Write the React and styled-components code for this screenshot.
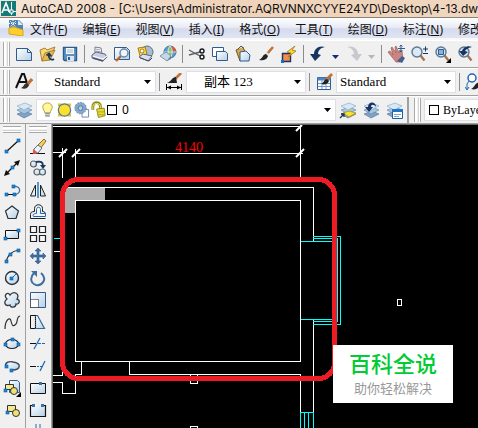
import React from "react";
import styled, { createGlobalStyle } from "styled-components";

const blue = "#2f5b8f";
const pale = "#cfe2f1";
const navy = "#17365f";

const Sheets = () => (
    <>
        <path d="M2 13l8-3 7 3-8 4z" fill="#7fa3c6" stroke="#4d7299" strokeWidth=".6" />
        <path d="M2 9l8-3 7 3-8 4z" fill="#a9c6df" stroke="#5b82a8" strokeWidth=".6" />
        <path d="M2 5l8-3 7 3-8 4z" fill="#d8e8f4" stroke="#7fa3c4" strokeWidth=".6" />
    </>
)

const Glass = ({ x = 7, y = 7, r = 5 }) => (
    <>
        <path d={`M${x + r * 0.7} ${y + r * 0.7}l4 5`} stroke="#a9744f" strokeWidth="2.4" />
        <circle cx={x} cy={y} r={r} fill="#d9eaf6" stroke="#5c7893" strokeWidth="1.4" />
    </>
)

const Brush = () => (
    <>
        <path d="M16 2l-6 7" stroke="#c2703a" strokeWidth="2.6" />
        <path d="M11 8l-2 2" stroke="#ddd" strokeWidth="3" />
        <path d="M9 9c-3 0-3 4-7 6 4 1 8 0 9-4z" fill="#222" />
    </>
)

const Handles = ({ points }) => points.map(([x, y]) => (
    <rect key={x + "-" + y} x={x - 1.5} y={y - 1.5} width="3" height="3" fill="#1a86d8" stroke="#0a5aa0" strokeWidth=".6" />
))

const icons = {
    create: <path d="M1.500 3.500h11l4 4v8h-15z M12.500 3.500v4h4" fill="url(#paper)" stroke={blue} />,
    open: <>
        <path d="M2 5l5-2 2 2 8-3-3 6-10 8z" fill="#f5d778" stroke="#a9812f" />
        <path d="M4 16l3-8 10-3-5 10z" fill="#e8b94e" stroke="#a9812f" />
        <path d="M16 14c-3 2-6-1-5-4M8.500 10.500l2.500-2 2.500 3" fill="none" stroke={navy} strokeWidth="1.800" />
    </>,
    save: <>
        <path d="M2.500 2.500h13v13h-12l-1-1z" fill="#5d91c4" stroke={blue} strokeWidth="1.400" />
        <path d="M5 3h8v6H5z" fill="#f4f8fb" />
        <path d="M6 5h6M6 7h6" stroke="#9fb6ca" />
        <path d="M6 11h7v5H6z" fill="#dbe5ee" />
        <path d="M7 12h2v3H7z" fill={blue} />
    </>,
    print: <>
        <path d="M5 9V2l6 1 1 6z" fill="#fff" stroke="#777b91" />
        <path d="M6 4l4 1M6 6l5 1" stroke="#9ba0b5" />
        <path d="M2 10l4-3 9 2 2 3-4 4-11-3z" fill="#c9cee0" stroke="#5f6580" />
        <path d="M3 11l10 3 4-3" fill="none" stroke="#fff" />
        <path d="M3 13l10 3" stroke="#4f5570" strokeWidth="1.500" />
    </>,
    preview: <>
        <path d="M1.500 2.500h12l3 3v9h-15z" fill="url(#paper)" stroke={blue} />
        <path d="M8 11l-5 5" stroke="#b8642c" strokeWidth="2.400" />
        <circle cx="11" cy="8" r="4" fill="#eef6fb" stroke="#6b89a6" strokeWidth="1.500" />
    </>,
    publish: <>
        <circle cx="11" cy="7" r="6" fill="#a7bdd0" stroke="#53728f" />
        <path d="M2 3l7-1 2 7-7 2z" fill="#ffdc43" stroke="#a77e14" />
        <circle cx="6" cy="6" r="2" fill="#fff" stroke="#a77e14" />
        <path d="M3 12l4-3 9 2-4 5z" fill="#dce0ec" stroke="#5d6582" />
        <path d="M4 13l9 3 3-3" fill="none" stroke="#47506b" />
    </>,
    web: <>
        <circle cx="11" cy="7" r="6" fill="#4fa0d1" stroke="#4777a4" />
        <path d="M11 1c4 0 6 3 6 6l-5 1z" fill="#cf5844" />
        <path d="M11 1c-3 3-2 8 0 12 3-4 3-9 0-12zM5 7h12" fill="#83c26d" stroke="#e9f4fa" strokeWidth=".8" />
        <path d="M1 11l6-4 5 4-4 5z" fill="#c8d7e7" stroke="#8097b0" />
        <path d="M8 16l4-5v3z" fill="#6880a0" />
    </>,
    cut: <>
        <path d="M1 5l11 6M1 10l11-3" stroke="#59616a" strokeWidth="1.400" />
        <circle cx="14" cy="6" r="2" fill="none" stroke="#16191f" strokeWidth="1.400" />
        <circle cx="14" cy="12" r="2" fill="none" stroke="#16191f" strokeWidth="1.400" />
    </>,
    copy: <>
        <path d="M1.500 2.500h11v9h-11z" fill="#fff" stroke={blue} />
        <path d="M5.500 6.500h9l2 2v7h-11z" fill="url(#paper)" stroke={blue} />
    </>,
    paste: <>
        <path d="M2 5l7-3 4 10-7 4z" fill="#d9a94b" stroke="#73541f" />
        <path d="M4 4l3-3 2 2" fill="#ddd" stroke="#555" />
        <path d="M6 7l6-1 4 4-1 6H6z" fill="url(#paper)" stroke={blue} />
    </>,
    match: <Brush />,
    block: <>
        <path d="M2.500 8.500h8v8h-8z" fill="#f58a52" stroke={navy} strokeWidth="1.400" />
        <path d="M1 15h3v3H1z" fill="#0b74c8" />
        <path d="M15 1L7 7l4 1-3 4 8-6-4-1z" fill="#ffd42e" stroke="#a5731a" strokeWidth=".8" />
    </>,
    undo: <path d="M16 2C10 0 5 4 5 9H1l5 7 6-6-3-1c0-3 2-6 7-7z" fill={navy} />,
    redo: <path d="M2 2c6-2 11 2 11 7h4l-5 7-6-6 3-1c0-3-2-6-7-7z" fill="#c7c9cc" />,
    pan: <>
        <path d="M1 7l2-1 3 4-2-7 1-1 4 6-1-6 1-1 3 7 1-3 2 1 1 8-3 3H9z" fill="#cc8580" stroke="#9a5b5a" strokeWidth=".7" />
        <path d="M10 16l5-5 3 2-3 5z" fill="#42618e" />
        <path d="M14 0v7M11 3.500h7M12.500 1.500L14 0l1.500 1.500M12.500 5.500L14 7l1.500-1.500" fill="none" stroke={blue} />
    </>,
    zoom: <><Glass /><path d="M13 4h5M15.500 1.500v5M13 8.500h5" stroke={navy} /></>,
    zoomWindow: <>
        <Glass x={8} />
        <path d="M5.500 4.500h5v5h-5z" fill="#8cb4da" stroke={blue} />
        <path d="M18 13v5h-5z" fill="#000" />
    </>,
    zoomPrevious: <>
        <Glass x={8} />
        <path d="M16 2c-5-2-9 1-10 4H3l4 5 5-4-3-1c1-2 3-3 7-4z" fill={navy} />
    </>,
    textStyle: <>
        <path d="M1 15L7 1h2l4 12M4 9h7" fill="none" stroke="#111" strokeWidth="2" />
        <path d="M17 6l-5 6" stroke="#c2703a" strokeWidth="3" />
        <path d="M12 10c-3 0-3 4-6 5 4 2 7 0 8-3z" fill="#333" />
    </>,
    dimStyle: <>
        <path d="M16 0l-6 6" stroke="#c2703a" strokeWidth="2.600" />
        <path d="M11 4c-4 0-4 4-9 6h10z" fill="#222" />
        <path d="M1.500 11v6M16.500 11v6M2 14.500h14" fill="none" stroke="#000" />
        <path d="M2 14.500l4-2v4zM16 14.500l-4-2v4z" fill="#000" />
    </>,
    tableStyle: <>
        <path d="M2.500 4.500h13v12h-13z" fill="#fff" stroke={blue} />
        <path d="M2.500 4.500h13v3h-13z" fill="#4f86c6" />
        <path d="M3 10.500h12M3 13.500h12M7 7v9M11 7v9" stroke="#6f9bcb" />
        <path d="M17 1l-6 6" stroke="#c2703a" strokeWidth="2.600" />
        <path d="M12 6c-3 0-3 4-6 5 4 1 7 0 8-3z" fill="#222" />
    </>,
    leaderStyle: <>
        <circle cx="7" cy="5" r="4" fill="#fff" stroke="#1e67ad" strokeWidth="1.500" />
        <path d="M4 8l-2 3v5M0 14l2 3 2-3" fill="none" stroke="#1e67ad" />
        <path d="M17 8l-5 4" stroke="#c2703a" strokeWidth="3" />
        <path d="M13 10c-3 0-3 4-7 6 4 1 7 0 9-3z" fill="#222" />
    </>,
    layers: <Sheets />,
    layerCurrent: <>
        <Sheets />
        <path d="M4 12l6-2 7 2-7 4z" fill="#f7e12c" stroke="#9c8a12" strokeWidth=".7" />
        <path d="M1 17l4-4M2 13h3v3" fill="none" stroke={navy} strokeWidth="1.300" />
    </>,
    layerPrevious: <>
        <Sheets />
        <path d="M14 6c0-6-8-6-8 0H3l4 5 4-5H9c0-3 3-3 5 0z" fill={navy} />
    </>,
    layerStates: <>
        <Sheets />
        <path d="M7.500 8.500h10v9h-10z" fill="#fff" stroke="#135fa8" />
        <path d="M7 8h11v3H7z" fill="#1f74c3" />
        <path d="M9 13.500h7M9 15.500h5" stroke="#7ca5ca" />
    </>,
    bulb: <>
        <path d="M6 12c0-3-2-3-2-6 0-6 10-6 10 0 0 3-2 3-2 6z" fill="#fff6a0" stroke="#b7a335" />
        <path d="M6.500 12h5v4h-5z" fill="#8b93a0" />
        <path d="M6 14h6" stroke="#e5e5e5" />
    </>,
    sun: <>
        <path d="M2 2h4v3H2zM12 2h4v3h-4zM2 13h4v3H2zM12 13h4v3h-4z" fill="#d8c83a" />
        <circle cx="9" cy="9" r="6.500" fill="#ffdf2c" stroke="#4c7994" strokeWidth="1.300" />
    </>,
    freeze: <>
        <path d="M9.500 8.500h7v8h-7z" fill="#fff" stroke="#6c87a8" />
        <circle cx="8" cy="7" r="6" fill="#86a9cb" stroke="#5e82a8" strokeDasharray="2 1" />
        <circle cx="8" cy="7" r="2.500" fill="#b9d0e4" stroke="#4e769f" />
    </>,
    lock: <>
        <path d="M3 9V5c0-5 8-5 8 0v4" fill="none" stroke="#8f8a1d" strokeWidth="3" />
        <path d="M3 9V5c0-4 8-4 8 0v3" fill="none" stroke="#ece46b" />
        <path d="M7 8l8-1 1 8-7 2z" fill="#e9dc32" stroke="#8f8a1d" />
        <path d="M8 11h7M8 14h7" stroke="#aaa31f" />
    </>,
    line: <><path d="M3 15L15 4" stroke="#111" strokeWidth="1.200" /><Handles points={[[3.5, 14.5], [15.5, 3.5]]} /></>,
    ray: <>
        <path d="M3 15L15 3" stroke="#111" strokeWidth="1.200" />
        <path d="M1 17l2-6 4 4zM17 1l-6 2 4 4z" fill="#111" />
        <Handles points={[[9.5, 8.5]]} />
    </>,
    polyline: <>
        <path d="M2 13.500h9" stroke="#111" />
        <path d="M11 13.500c8 0 7-9 0-8" fill="none" stroke="#3b71a6" strokeWidth="1.300" />
        <Handles points={[[3.5, 13.5], [11.5, 13.5], [10.5, 5.5]]} />
    </>,
    polygon: <path d="M9 3l6.500 5-2.500 7.500H5L2.500 8z" fill="url(#paper)" stroke="#27313d" strokeWidth="1.200" />,
    rectangle: <><path d="M2.500 5.500h13v8h-13z" fill="url(#paper)" stroke="#111" /><Handles points={[[2.5, 13.5], [15.5, 5.5]]} /></>,
    arc: <><path d="M3 16C4 9 8 4 16 3" fill="none" stroke="#333" strokeWidth="1.200" /><Handles points={[[3.5, 14.5], [7.5, 7.5], [15.5, 3.5]]} /></>,
    circle: <><circle cx="9" cy="9" r="6.500" fill="url(#paper)" stroke="#27313d" strokeWidth="1.400" /><path d="M9 9l4-4" stroke="#0b74c8" /><Handles points={[[8.5, 9.5]]} /></>,
    cloud: <path d="M4 8C0 4 5 0 7 4c4-5 10-1 7 4 4 1 2 6-1 5 0 4-6 4-6 1-5 2-7-3-3-6z" fill="url(#paper)" stroke="#333b45" strokeWidth="1.300" />,
    spline: <path d="M2 16C2 7 7 3 8 8s2 6 5 3c2-2 0-7 4-8" fill="none" stroke="#333" strokeWidth="1.200" />,
    ellipse: <><ellipse cx="9" cy="9" rx="6.500" ry="4.500" fill="url(#paper)" stroke="#222" strokeWidth="1.200" /><Handles points={[[2.5, 9.5], [9.5, 4.5], [15.5, 9.5]]} /></>,
    ellipseArc: <><path d="M3 10C1 5 7 4 10 5c9 1 8 8-1 8" fill="url(#paper)" stroke="#3a4857" strokeWidth="1.400" /><Handles points={[[3.5, 9.5], [8.5, 13.5]]} /></>,
    insert: <>
        <path d="M6.500 1.500h8l2 2v10h-10z" fill="url(#paper)" stroke={blue} />
        <path d="M2.500 5.500h8v5h-8z" fill="#f4ea8b" stroke="#333" />
        <circle cx="11" cy="12" r="3.500" fill="#eee176" stroke="#333" />
        <path d="M18 13v5h-5z" fill="#000" />
        <Handles points={[[2.5, 11.5]]} />
    </>,
    makeBlock: <><path d="M4.500 4.500h8v6h-8z" fill="#f4ea8b" stroke="#333" /><circle cx="13" cy="12" r="3.500" fill="#eee176" stroke="#333" /><Handles points={[[4.5, 11.5]]} /></>,
    erase: <>
        <path d="M1 16.500h15" stroke="#111" />
        <path d="M8 9l7-7 2 2-6 8z" fill="#f4cf58" stroke="#8c6a22" />
        <path d="M5 12l4-4 4 3-4 5H5z" fill="#eef3f7" stroke="#53718e" />
        <path d="M4 12l4 3-1 2H4z" fill="#df5144" />
    </>,
    duplicate: <>
        <circle cx="4.500" cy="5" r="3" fill="url(#paper)" stroke="#56616d" strokeWidth="1.200" />
        <circle cx="8" cy="13" r="3" fill="url(#paper)" stroke="#56616d" strokeWidth="1.200" />
        <circle cx="13.500" cy="13" r="3" fill="url(#paper)" stroke="#56616d" strokeWidth="1.200" />
        <path d="M7 3c5-1 7 0 7 4" fill="none" stroke={navy} strokeWidth="1.800" />
        <path d="M11 6h6l-3 4z" fill={navy} />
    </>,
    mirror: <><path d="M6.500 4v11H1.500z" fill="#e8f0f6" stroke="#222" /><path d="M11.500 4v11h5z" fill={pale} stroke="#222" /><path d="M9 1v16" stroke="#0b74c8" strokeWidth="1.400" /></>,
    offset: <>
        <path d="M1.500 15.500v-4c0-2 1-3 4-3v-3c0-5 8-5 8 0v3c2 0 3 1 3 3" fill="none" stroke="#222" />
        <path d="M1.500 15.500h15" stroke="#222" />
        <path d="M4.500 13.500c-1-2 0-3 3-3v-4c0-3 4-3 4 0v4h5v3z" fill="#eef5fb" stroke="#1e67ad" />
    </>,
    array: <path d="M1.500 1.500h6v6h-6zM10.500 1.500h6v6h-6zM1.500 10.500h6v6h-6zM10.500 10.500h6v6h-6z" fill="#f4f8fb" stroke="#222" strokeWidth="1.200" />,
    move: <path d="M9 1l3 3h-2v4h4V6l3 3-3 3v-2h-4v4h2l-3 3-3-3h2v-4H4v2L1 9l3-3v2h4V4H6z" fill="#3f6ea5" stroke="#315d8f" strokeWidth=".6" />,
    rotate: <>
        <path d="M12 4c7 6 1 13-5 12-6-2-6-8-2-12" fill="none" stroke="#3f6ea5" strokeWidth="2" />
        <path d="M2 2h6v6z" fill="#3f6ea5" />
    </>,
    scale: <><path d="M1.500 1.500h15v15h-15z" fill="url(#paper)" stroke={blue} /><path d="M1.500 8.500h8v8h-8z" fill="#fff" stroke="#111" strokeDasharray="1 1" /></>,
    stretch: <><path d="M6.500 2.500h2l7 13h-9z" fill="url(#paper)" stroke="#376895" strokeWidth="1.200" /><path d="M6 2.500H1.500v13H6" fill="none" stroke="#111" /><path d="M6.500 2v14" stroke="#111" strokeDasharray="1 1" /></>,
    trim: <><path d="M1 8.500h6" stroke="#111" /><path d="M9 8.500h8" stroke="#1e67ad" strokeDasharray="3 1" /><path d="M5 14l6-11" stroke="#1e67ad" strokeWidth="1.200" /></>,
    extend: <><path d="M1 9.500h6" stroke="#111" /><path d="M8 9.500h5" stroke="#1e67ad" strokeDasharray="2 1" /><path d="M11 14l5-10" stroke="#1e67ad" strokeWidth="1.300" /></>,
    breakPoint: <><path d="M1.500 4.500h15v10h-15z" fill="url(#paper)" stroke="#111" /><path d="M10 3h3v3h-3z" fill="#3773aa" /></>,
    breakLine: <><path d="M2 4h14v11H2z" fill="url(#paper)" /><path d="M4 4.500H1.500v11h15v-11H14" fill="none" stroke="#111" strokeWidth="1.200" /><path d="M3 3h3v3H3zM12 3h3v3h-3z" fill="#3773aa" /></>,
    join: <path d="M7 1v9M11 1v9" stroke="#1e67ad" />,
}

const Icon = ({ name }) => <Glyph viewBox="0 0 18 18" aria-hidden="true">{icons[name]}</Glyph>

const Arrow = () => <ArrowGlyph viewBox="0 0 7 4" aria-hidden="true"><path d="M0 0h7L3.500 4z" fill="currentColor" /></ArrowGlyph>

const menus = [
    ["文件", "F"], ["编辑", "E"], ["视图", "V"], ["插入", "I"], ["格式", "O"],
    ["工具", "T"], ["绘图", "D"], ["标注", "N"], ["修改", "M"],
]

const standardTools = [
    "create", "open", "save", "|", "print", "preview", "publish", "web", "|",
    "cut", "copy", "paste", "match", "block", "|", "undo", "v", "redo", "v-off", "|",
    "pan", "zoom", "zoomWindow", "zoomPrevious",
]

const drawTools = [
    "line", "ray", "polyline", "polygon", "rectangle", "arc", "circle",
    "cloud", "spline", "ellipse", "ellipseArc", "insert", "makeBlock",
]

const modifyTools = [
    "erase", "duplicate", "mirror", "offset", "array", "move", "rotate",
    "scale", "stretch", "trim", "extend", "breakPoint", "breakLine", "join",
]

const Tool = ({ name }) => {
    if (name === "|") return <Divider />
    if (name === "v" || name === "v-off") {
        return <MoreButton aria-label="history" $off={name === "v-off"}><Arrow /></MoreButton>
    }
    return <ToolButton aria-label={name}><Icon name={name} /></ToolButton>
}

const StyleSelect = ({ label, value, indent }) => (
    <Combo $width={120}>
        <Select aria-label={label} $indent={indent}><option>{value}</option></Select>
        <Arrow />
    </Combo>
)

const Drawing = () => (
    <Plan aria-label="floor plan">
        <g transform="translate(-53 -125)" fill="none" stroke="#fff" shapeRendering="crispEdges">
            <path d="M65 187h40v13H75v13H65z" fill="#adadad" stroke="none" />
            <path d="M53 126.500h248M300.500 125v52M53 152.500h13M62.500 148v30M75.500 149v28M75 153.500h228" />
            <path d="M68 187.500h245.500V241M313.500 319v93M300.500 374v38" />
            <path d="M75.500 200.500h225v161h-225z" />
            <path d="M81.500 361v13.500h-6v19h-13v-11H53M53 375.500h9.500V371M129.500 361v13.500h171" />
            <path d="M190.500 374v9h7v-9M190.500 428v-1.500h7v1.500" />
            <path d="M54 251.500h7" />
            <path d="M397.500 299.500h4v6h-4z" />
            <g stroke="#00ffff">
                <path d="M54 238.500h7M301 241.500h32M301 319.500h32" />
                <path d="M313 236.500h27.500v88H313M313 238.500h24.500v83H313" />
                <path d="M300.500 428v-15.500h13V428M304.500 412v16M308.500 412v16" />
            </g>
            <g strokeWidth="2" shapeRendering="auto">
                <path d="M59 157l8-8M72 157l8-8M296 157l8-8M296 131l6-6" />
            </g>
            <DimensionText x="175" y="152">4140</DimensionText>
            <rect x="62.500" y="179.500" width="272" height="199" rx="16" stroke="#ed1c24" strokeWidth="5" />
        </g>
    </Plan>
)

const App = () => {
    return (
        <Window>
            <GlobalStyle />
            <Defs aria-hidden="true">
                <linearGradient id="paper" x1="0" y1="0" x2="1" y2="1">
                    <stop offset="0" stopColor="#fff" />
                    <stop offset="1" stopColor="#b5d0e6" />
                </linearGradient>
            </Defs>
            <TitleBar>
                <Logo viewBox="0 0 15 15" aria-hidden="true">
                    <path d="M0 0h15v15H0z" fill="#147b7b" />
                    <path d="M1 12L5 2l4 10M3 9h5" fill="none" stroke="#fff" strokeWidth="1.600" />
                    <path d="M10.500 1v13M7 10.500h8" stroke="#fff" />
                    <path d="M9 9h3v3H9z" fill="#147b7b" stroke="#fff" />
                </Logo>
                <Title>AutoCAD 2008 - [C:\Users\Administrator.AQRVNNXCYYE24YD\Desktop\4-13.dwg]</Title>
            </TitleBar>
            <MenuBar>
                <FileGlyph viewBox="0 0 16 16" aria-hidden="true">
                    <path d="M1 0h10l4 4v9H1z" fill="#4e83b5" />
                    <path d="M10 0v5h5z" fill="#dcebf6" />
                    <path d="M5 0v7M1 3.500h8M2 1l6 6M8 1L2 7" stroke="#fff" strokeDasharray="1 1" />
                    <path d="M1 8l5-1 9 3v6L1 14z" fill="#ffcf2e" stroke="#d9a616" />
                </FileGlyph>
                {menus.map(([name, key]) => (
                    <MenuButton key={key}>{name}(<u>{key}</u>)</MenuButton>
                ))}
            </MenuBar>
            <Toolbar>
                <Grip />
                {standardTools.map((name, i) => <Tool key={i} name={name} />)}
            </Toolbar>
            <Toolbar>
                <Grip />
                <Tool name="textStyle" />
                <StyleSelect label="text style" value="Standard" indent={17} />
                <Divider />
                <Tool name="dimStyle" />
                <StyleSelect label="dimension style" value="副本 123" indent={17} />
                <Divider />
                <Tool name="tableStyle" />
                <StyleSelect label="table style" value="Standard" indent={3} />
                <Divider />
                <Tool name="leaderStyle" />
            </Toolbar>
            <Toolbar>
                <Grip />
                <Tool name="layers" />
                <Combo $width={300}>
                    <LayerFlags>
                        <Icon name="bulb" />
                        <Icon name="sun" />
                        <Icon name="freeze" />
                        <Icon name="lock" />
                    </LayerFlags>
                    <Swatch />
                    <Select aria-label="layer" $indent={5} $size={12} $plain><option>0</option></Select>
                    <Arrow />
                </Combo>
                <Tool name="layerCurrent" />
                <Tool name="layerPrevious" />
                <Tool name="layerStates" />
                <PanelEdge />
                <Grip />
                <Combo $width={160} $inset={4}>
                    <Swatch />
                    <Select aria-label="color" $indent={4} $size={12}><option>ByLayer</option></Select>
                    <Arrow />
                </Combo>
            </Toolbar>
            <Workspace>
                <SideBar>
                    <SideGrip />
                    {drawTools.map((name) => <SideButton key={name} aria-label={name}><Icon name={name} /></SideButton>)}
                </SideBar>
                <SideBar>
                    <SideGrip />
                    {modifyTools.map((name) => <SideButton key={name} aria-label={name}><Icon name={name} /></SideButton>)}
                </SideBar>
                <Canvas>
                    <Drawing />
                    <Badge>
                        <BadgeTitle>百科全说</BadgeTitle>
                        <BadgeText>助你轻松解决</BadgeText>
                    </Badge>
                </Canvas>
            </Workspace>
        </Window>
    );
}

export default App;

const GlobalStyle = createGlobalStyle`
    * {
        box-sizing: border-box;
    }
    body {
        margin: 0;
        font-family: "Noto Sans", "Noto Sans CJK SC", sans-serif;
        font-size: 12px;
        color: #111;
    }
    button {
        border: 0;
        padding: 0;
        background: none;
        font: inherit;
        color: inherit;
    }
`
const Window = styled.div`
    display: flex;
    flex-direction: column;
    height: 100vh;
    overflow: hidden;
    background: #f0f0f0;
`
const Defs = styled.svg`
    position: absolute;
    width: 0;
    height: 0;
`
const TitleBar = styled.header`
    display: flex;
    flex: none;
    align-items: center;
    gap: 5px;
    height: 18px;
    padding-left: 1px;
    background: linear-gradient(90deg, #f6e5d6, #efd3ba 45%, #f0d6bf);
    border-bottom: 1px solid #8c8178;
`
const Logo = styled.svg`
    flex: none;
    width: 15px;
    height: 15px;
`
const Title = styled.h1`
    margin: 0;
    font-family: Inter, sans-serif;
    font-size: 12px;
    line-height: 16px;
    font-weight: 400;
    white-space: nowrap;
`
const MenuBar = styled.nav`
    display: flex;
    flex: none;
    align-items: center;
    gap: 15px;
    height: 22px;
    padding-left: 8px;
    background: linear-gradient(#fff, #e9ecf6 45%, #d5dbed 55%, #e0e5f3);
    border-bottom: 2px solid #f8f8f8;
`
const FileGlyph = styled.svg`
    flex: none;
    width: 16px;
    height: 16px;
    margin-right: -9px;
`
const MenuButton = styled.button`
    flex: none;
    padding-top: 3px;
    line-height: 17px;
    text-align: left;
    white-space: nowrap;
`
const Toolbar = styled.div`
    display: flex;
    flex: none;
    align-items: center;
    height: 28px;
    padding-left: 3px;
    border-top: 1px solid #fff;
    border-bottom: 1px solid #a0a0a0;
`
const Grip = styled.span`
    flex: none;
    width: 7px;
    height: 24px;
    margin-right: 2px;
    border: solid #a8a8a8;
    border-width: 0 1px;
    background: linear-gradient(90deg, #fff 2px, #f0f0f0 2px, #f0f0f0 3px, #a8a8a8 3px, #fff 4px);
`
const PanelEdge = styled.span`
    flex: none;
    width: 4px;
    height: 26px;
    margin-right: 5px;
    border-right: 2px solid #a0a0a0;
`
const ToolButton = styled.button`
    display: flex;
    flex: none;
    align-items: center;
    justify-content: center;
    width: 23px;
    height: 24px;
`
const MoreButton = styled.button`
    flex: none;
    width: 13px;
    height: 24px;
    color: ${(props) => (props.$off ? "#b4b6bd" : "#1b2a78")};
`
const Glyph = styled.svg`
    flex: none;
    width: 18px;
    height: 18px;
    fill: none;
`
const ArrowGlyph = styled.svg`
    flex: none;
    width: 7px;
    height: 4px;
`
const Divider = styled.span`
    flex: none;
    width: 6px;
    height: 18px;
    background: linear-gradient(90deg, transparent 3px, #8c8c8c 3px, #8c8c8c 4px, transparent 4px);
`
const Combo = styled.div`
    display: flex;
    flex: none;
    align-items: center;
    width: ${(props) => props.$width}px;
    height: 22px;
    margin-left: 1px;
    padding: 0 4px 0 ${(props) => props.$inset || 0}px;
    background: #fff;
    border: 1px solid #dcdfe6;
    color: #000;
`
const Select = styled.select`
    flex: 1;
    min-width: 0;
    padding: 0 0 0 ${(props) => props.$indent}px;
    appearance: none;
    border: 0;
    background: none;
    color: #000;
    font-family: ${(props) => (props.$plain ? "\"Noto Sans\"" : "\"Liberation Serif\"")}, "Noto Sans CJK SC", serif;
    font-size: ${(props) => props.$size || 13}px;
    line-height: 18px;
`
const LayerFlags = styled.span`
    display: flex;
    padding-left: 2px;

    svg {
        width: 17px;
    }
`
const Swatch = styled.span`
    flex: none;
    width: 10px;
    height: 10px;
    border: 1px solid #000;
`
const Workspace = styled.div`
    display: flex;
    flex: 1;
    min-height: 0;
`
const SideBar = styled.div`
    display: flex;
    flex: none;
    flex-direction: column;
    align-items: center;
    width: 26px;
    overflow: hidden;
    padding-right: 1px;
    border-right: 1px solid #a0a0a0;
`
const SideGrip = styled.span`
    flex: none;
    width: 18px;
    height: 7px;
    margin: 2px 0;
    border: solid #a8a8a8;
    border-width: 1px 0;
    background: linear-gradient(#fff 2px, #f0f0f0 2px, #f0f0f0 3px, #a8a8a8 3px, #fff 4px);
`
const SideButton = styled.button`
    display: flex;
    flex: none;
    align-items: center;
    justify-content: center;
    width: 24px;
    height: 22px;
`
const Canvas = styled.main`
    position: relative;
    flex: 1;
    min-width: 0;
    overflow: hidden;
    background: #000;
    border-top: 1px solid #666;
    border-left: 1px solid #666;
`
const Plan = styled.svg`
    display: block;
    width: 100%;
    height: 100%;
`
const DimensionText = styled.text`
    fill: #f00;
    stroke: none;
    font-family: "Liberation Serif", serif;
    font-size: 14px;
`
const Badge = styled.aside`
    position: absolute;
    left: 280px;
    top: 220px;
    width: 120px;
    padding: 5px 0;
    background: #fff;
    text-align: center;
    font-family: "Liberation Sans", "Noto Sans CJK SC", sans-serif;
`
const BadgeTitle = styled.div`
    font-size: 22px;
    line-height: 30px;
    font-weight: 500;
    color: #0c3;
`
const BadgeText = styled.div`
    font-size: 13px;
    line-height: 18px;
    color: #999;
`
